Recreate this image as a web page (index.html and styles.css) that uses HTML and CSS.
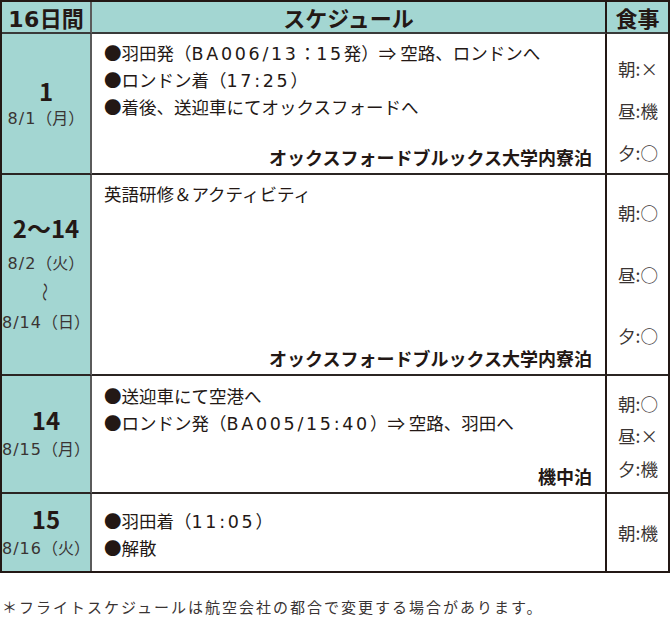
FILE: index.html
```html
<!DOCTYPE html>
<html lang="ja">
<head>
<meta charset="utf-8">
<link rel="stylesheet" href="styles.css">
</head>
<body>
<div class="sched">
  <div class="cell head c1"><span class="lat-b">16</span>日間</div>
  <div class="cell head c2">スケジュール</div>
  <div class="cell head c3">食事</div>

  <div class="cell day c1 r1">
    <div class="num">1</div>
    <div class="date"><span class="lat">8/1</span>（月）</div>
  </div>
  <div class="cell plan c2 r1">
    <div class="ln">●羽田発（<span class="lat">BA006/13</span>：<span class="lat">15</span>発）⇒ 空路、ロンドンへ</div>
    <div class="ln">●ロンドン着（<span class="lat">17:25</span>）</div>
    <div class="ln">●着後、送迎車にてオックスフォードへ</div>
    <div class="stay">オックスフォードブルックス大学内寮泊</div>
  </div>
  <div class="cell meal c3 r1 m1">
    <div>朝:×</div><div>昼:機</div><div>夕:○</div>
  </div>

  <div class="cell day c1 r2">
    <div class="num num-gap">2〜14</div>
    <div class="date"><span class="lat">8/2</span>（火）</div>
    <div class="date"><span class="wave">〜</span></div>
    <div class="date"><span class="lat">8/14</span>（日）</div>
  </div>
  <div class="cell plan c2 r2">
    <div class="ln">英語研修＆アクティビティ</div>
    <div class="stay">オックスフォードブルックス大学内寮泊</div>
  </div>
  <div class="cell meal c3 r2 m2">
    <div>朝:○</div><div>昼:○</div><div>夕:○</div>
  </div>

  <div class="cell day c1 r3">
    <div class="num">14</div>
    <div class="date"><span class="lat">8/15</span>（月）</div>
  </div>
  <div class="cell plan c2 r3">
    <div class="ln">●送迎車にて空港へ</div>
    <div class="ln">●ロンドン発（<span class="lat">BA005/15:40</span>）⇒ 空路、羽田へ</div>
    <div class="stay">機中泊</div>
  </div>
  <div class="cell meal c3 r3 m3">
    <div>朝:○</div><div>昼:×</div><div>夕:機</div>
  </div>

  <div class="cell day c1 r4 last">
    <div class="num">15</div>
    <div class="date"><span class="lat">8/16</span>（火）</div>
  </div>
  <div class="cell plan c2 r4 last center">
    <div class="ln">●羽田着（<span class="lat">11:05</span>）</div>
    <div class="ln">●解散</div>
  </div>
  <div class="cell meal c3 r4 last m4">
    <div>朝:機</div>
  </div>
</div>
<p class="note">＊フライトスケジュールは航空会社の都合で変更する場合があります。</p>
</body>
</html>
```
FILE: styles.css
```css
html, body {
  margin: 0;
  padding: 0;
  background: #ffffff;
}
body {
  width: 670px;
  font-family: "Noto Sans CJK JP", "Noto Sans", sans-serif;
  color: #231815;
}
.sched {
  box-sizing: border-box;
  width: 670px;
  border: 2px solid #231815;
  display: grid;
  grid-template-columns: 90px 515px 61px;
  grid-template-rows: 32px 141px 201px 118px 77px;
}
.cell {
  box-sizing: border-box;
  border-bottom: 2px solid #2b2523;
}
.cell.last {
  border-bottom: none;
}
.c1 {
  border-right: 2px solid #5b5b5b;
  background: #a3d6d2;
}
.c2 {
  border-right: 2px solid #231815;
}
.head {
  background: #a3d6d2;
  font-weight: 700;
  font-size: 22px;
  line-height: 30px;
  text-align: center;
  border-bottom: 2px solid #3a3a3a;
}
.lat {
  font-family: "DejaVu Sans", "Noto Sans CJK JP", sans-serif;
  letter-spacing: 2.7px;
}
.lat-b {
  font-family: "DejaVu Sans", "Noto Sans CJK JP", sans-serif;
  font-weight: 700;
  letter-spacing: 0.5px;
}
.day {
  display: flex;
  flex-direction: column;
  align-items: center;
  justify-content: center;
  padding-top: 2px;
}
.num {
  font-size: 24px;
  font-weight: 700;
  line-height: 28px;
}
.num-gap {
  margin-bottom: 6px;
}
.date {
  font-size: 16px;
  line-height: 28px;
  color: #3a3433;
  white-space: nowrap;
}
.date .lat {
  letter-spacing: 1px;
}
.r1 .num {
  line-height: 26px;
}
.r1 .date {
  line-height: 26px;
}
.wave {
  display: inline-block;
  transform: rotate(90deg) scaleY(0.7);
  font-size: 19px;
}
.plan {
  display: flex;
  flex-direction: column;
  padding: 6px 12px 3px 12px;
  font-size: 17.5px;
}
.plan.center {
  justify-content: center;
  padding-top: 4px;
  padding-bottom: 0;
}
.ln {
  line-height: 26px;
  white-space: nowrap;
}
.r3 .ln {
  line-height: 27px;
}
.stay {
  margin-top: auto;
  text-align: right;
  font-weight: 700;
  font-size: 18px;
  line-height: 26px;
  padding-right: 1px;
}
.meal {
  display: flex;
  flex-direction: column;
  justify-content: center;
  align-items: center;
  font-size: 17.5px;
  color: #3a3433;
  padding-left: 1px;
}
.m1 div {
  line-height: 42px;
}
.m1 {
  padding-top: 15px;
}
.m2 div {
  line-height: 61.5px;
}
.m3 div {
  line-height: 32.5px;
}
.m3 {
  padding-top: 5px;
}
.m4 div {
  line-height: 28px;
}
.note {
  margin: 24px 0 0 2px;
  font-size: 15px;
  line-height: 20px;
  letter-spacing: 2px;
  color: #3a3433;
}
```
